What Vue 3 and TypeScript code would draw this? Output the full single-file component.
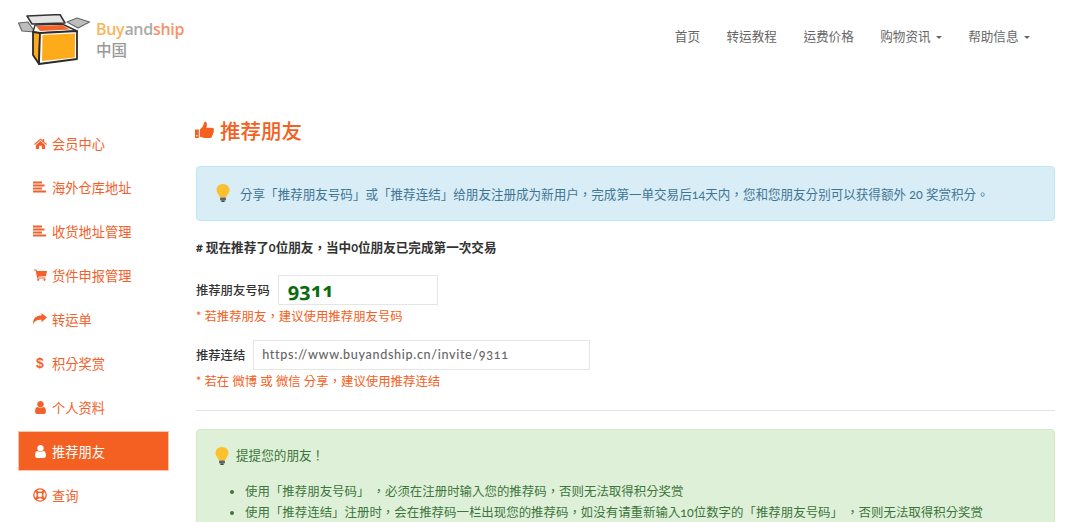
<script setup lang="ts">
interface MenuItem { label: string; icon: string; active?: boolean }
const menu: MenuItem[] = [
  { label: '会员中心', icon: 'home' },
  { label: '海外仓库地址', icon: 'lines' },
  { label: '收货地址管理', icon: 'lines' },
  { label: '货件申报管理', icon: 'cart' },
  { label: '转运单', icon: 'share' },
  { label: '积分奖赏', icon: 'dollar' },
  { label: '个人资料', icon: 'user' },
  { label: '推荐朋友', icon: 'user', active: true },
  { label: '查询', icon: 'ring' },
]
const nav = [
  { label: '首页' },
  { label: '转运教程' },
  { label: '运费价格' },
  { label: '购物资讯', caret: true },
  { label: '帮助信息', caret: true },
]
</script>

<template>
  <div class="page">
    <header class="header">
      <div class="logo">
        <svg class="box" width="72" height="52" viewBox="0 0 72 52">
          <path d="M0.500 9 L10 8 L17 18 L4 17 Z" fill="#bdbdbd" stroke="#666" stroke-width="1.200" stroke-linejoin="round" />
          <path d="M9 2 L42 0.500 L47 9 L14 10 Z" fill="#e4e4e4" stroke="#333" stroke-width="1.500" stroke-linejoin="round" />
          <path d="M49 8 L59 4 L71.500 8 L60 14 Z" fill="#bdbdbd" stroke="#666" stroke-width="1.200" stroke-linejoin="round" />
          <path d="M15 18 L17 11 L44 10 L59 17 L22 19 Z" fill="#fff" stroke="#333" stroke-width="1.400" stroke-linejoin="round" />
          <path d="M18 12 L44 11 L52 15.500 L22 17 Z" fill="#f4642a" />
          <path d="M15 18 L22 19 L21 50 L15 41 Z" fill="#fdab1a" stroke="#2b2b2b" stroke-width="1.800" stroke-linejoin="round" />
          <path d="M22 19 L59 17 L59 45 L21 50 Z" fill="#fff" stroke="#2b2b2b" stroke-width="1.800" stroke-linejoin="round" />
          <path d="M24.500 21 L57 19.500 L56.800 43.500 L24 47 Z" fill="#fdab1a" />
        </svg>
        <div class="logo-text">
          <div class="brand"><span class="b1">Buy</span><span class="b2">and</span><span class="b3">ship</span></div>
          <div class="cn">中国</div>
        </div>
      </div>
      <nav class="nav">
        <a v-for="n in nav" :key="n.label" class="nav-item">
          {{ n.label }}<i v-if="n.caret" class="caret"></i>
        </a>
      </nav>
    </header>

    <div class="body">
      <aside class="side">
        <a v-for="m in menu" :key="m.label" class="side-item" :class="{ active: m.active }">
          <span class="ico">
            <svg v-if="m.icon === 'home'" width="13" height="11" viewBox="0 0 14 12" fill="currentColor">
              <path d="M7 0.500 L9.500 2.700 V1 H11 V4 L14 6.600 L13.200 7.500 L7 2.200 L0.800 7.500 L0 6.600 Z" />
              <path d="M7 3.400 L12 7.600 V12 H8.500 V8.500 H5.500 V12 H2 V7.600 Z" />
            </svg>
            <svg v-else-if="m.icon === 'lines'" width="14" height="12" viewBox="0 0 14 12" fill="currentColor">
              <rect x="0" y="0.500" width="9" height="2" /><rect x="0" y="3.500" width="11.500" height="2" />
              <rect x="0" y="6.500" width="9" height="2" /><rect x="0" y="9.500" width="13" height="2" />
            </svg>
            <svg v-else-if="m.icon === 'cart'" width="13" height="12" viewBox="0 0 13 12" fill="currentColor">
              <path d="M0 0.500 H2.500 L2.900 2 H13 L12 7 L4 7.800 L4.200 8.600 H11.500 V9.500 H3.200 L1.700 1.500 H0 Z" />
              <circle cx="4.300" cy="10.800" r="1.100" /><circle cx="10.500" cy="10.800" r="1.100" />
            </svg>
            <svg v-else-if="m.icon === 'share'" width="14" height="12" viewBox="0 0 14 12" fill="currentColor">
              <path d="M14 4.500 L8.500 0 V2.500 C3 2.500 0 5 0 11.500 C1.500 8 4 6.800 8.500 6.800 V9.200 Z" />
            </svg>
            <span v-else-if="m.icon === 'dollar'" class="dollar">$</span>
            <svg v-else-if="m.icon === 'user'" width="11" height="13" viewBox="0 0 1280 1536" fill="currentColor">
              <path d="M1280 1271q0 109-62.500 187t-150.500 78h-854q-88 0-150.500-78t-62.500-187q0-85 8.500-160.500t31.500-152 58.500-131 94-89 134.500-34.500q131 128 313 128t313-128q76 0 134.500 34.500t94 89 58.500 131 31.500 152 8.500 160.500zm-256-887q0 159-112.500 271.500t-271.500 112.500-271.500-112.500-112.500-271.500 112.500-271.500 271.500-112.500 271.500 112.500 112.500 271.500z" />
            </svg>
            <svg v-else width="14" height="14" viewBox="0 0 14 14" fill="none" stroke="currentColor">
              <circle cx="7" cy="7" r="6.200" stroke-width="1.300" />
              <circle cx="7" cy="7" r="2.900" stroke-width="1.300" />
              <path d="M2.600 2.600 L5 5 M11.400 2.600 L9 5 M2.600 11.400 L5 9 M11.400 11.400 L9 9" stroke-width="2.600" />
            </svg>
          </span>
          <span>{{ m.label }}</span>
        </a>
      </aside>

      <main class="main">
        <h1 class="title">
          <svg class="thumb" width="19" height="18" viewBox="0 0 19 18" fill="currentColor">
            <path d="M0 8.500 H3.800 V17 H0 Z M1.900 14 A0.800 0.800 0 1 0 1.900 15.600 A0.800 0.800 0 1 0 1.900 14 Z" fill-rule="evenodd" />
            <path d="M4.800 8.500 C7 7.500 8.500 4.500 9 1.800 C9.200 0.500 10.200 0.400 11 1 C12.400 2.300 12 5 11.300 6.800 H17 C18.800 6.800 19.400 8.300 18.600 9.500 C19.100 10.600 18.800 11.700 18 12.300 C18.300 13.400 17.900 14.300 17 14.800 C17.100 16.300 16 17 14.800 17 H10.500 C8.500 17 6.800 16 4.800 15.700 Z" />
          </svg>
          <span>推荐朋友</span>
        </h1>

        <div class="alert info">
          <svg class="bulb" width="14" height="18" viewBox="0 0 14 18">
            <path d="M7 0 C3 0 0.500 2.800 0.500 6 C0.500 9 3 10.500 3.800 13.500 H10.200 C11 10.500 13.500 9 13.500 6 C13.500 2.800 11 0 7 0 Z" fill="#fbc02d" />
            <rect x="4" y="13.500" width="6" height="3" rx="1" fill="#5f6368" /><rect x="5.200" y="16.500" width="3.600" height="1.500" rx="0.700" fill="#444" />
          </svg>
          <span>分享「推荐朋友号码」或「推荐连结」给朋友注册成为新用户，完成第一单交易后14天内，您和您朋友分别可以获得额外 20 奖赏积分。</span>
        </div>

        <p class="count"># 现在推荐了0位朋友，当中0位朋友已完成第一次交易</p>

        <div class="field f1">
          <label>推荐朋友号码</label>
          <div class="code">9311</div>
        </div>
        <p class="hint">* 若推荐朋友，建议使用推荐朋友号码</p>

        <div class="field f2">
          <label>推荐连结</label>
          <div class="url">https://www.buyandship.cn/invite/9311</div>
        </div>
        <p class="hint">* 若在 微博 或 微信 分享，建议使用推荐连结</p>

        <hr class="rule" />

        <div class="alert success">
          <div class="remind">
            <svg class="bulb" width="14" height="18" viewBox="0 0 14 18">
              <path d="M7 0 C3 0 0.500 2.800 0.500 6 C0.500 9 3 10.500 3.800 13.500 H10.200 C11 10.500 13.500 9 13.500 6 C13.500 2.800 11 0 7 0 Z" fill="#fbc02d" />
              <rect x="4" y="13.500" width="6" height="3" rx="1" fill="#5f6368" /><rect x="5.200" y="16.500" width="3.600" height="1.500" rx="0.700" fill="#444" />
            </svg>
            <span>提提您的朋友！</span>
          </div>
          <ul class="list">
            <li>使用「推荐朋友号码」 ，必须在注册时输入您的推荐码，否则无法取得积分奖赏</li>
            <li>使用「推荐连结」注册时，会在推荐码一栏出现您的推荐码，如没有请重新输入10位数字的「推荐朋友号码」 ，否则无法取得积分奖赏</li>
          </ul>
        </div>
      </main>
    </div>
  </div>
</template>

<style>
html, body { margin: 0; background: #fff; overflow: hidden; }
</style>

<style scoped>
.page {
  width: 1086px;
  height: 522px;
  overflow: hidden;
  font-family: "Lato", "Noto Sans CJK TC", sans-serif;
  font-variant-numeric: oldstyle-nums;
  font-size: 12.6px;
  color: #555;
}
.header {
  display: flex;
  justify-content: space-between;
  height: 100px;
  padding: 14px 56.5px 0 18px;
  box-sizing: border-box;
}
.logo { display: flex; align-items: flex-start; height: 54px; }
.logo-text { margin-left: 6px; margin-top: 5px; }
.brand { font-size: 16px; line-height: 20px; font-family: "Open Sans", sans-serif; font-weight: 600; letter-spacing: -0.3px; }
.b1 { color: #fdb45c; }
.b2 { color: #aaa; }
.b3 { color: #f9906a; }
.cn { font-size: 15.5px; line-height: 22px; color: #999; font-weight: 500; }
.nav { display: flex; gap: 26.5px; padding-top: 13px; }
.nav-item { line-height: 20px; color: #666; display: flex; align-items: center; height: 20px; }
.caret {
  display: inline-block;
  margin-left: 5px;
  width: 0; height: 0;
  border-top: 3.500px solid #666;
  border-left: 3.500px solid transparent;
  border-right: 3.500px solid transparent;
}
.body { display: flex; align-items: flex-start; padding-left: 18px; }
.side { width: 151px; flex: none; margin-top: 23px; display: flex; flex-direction: column; gap: 4px; }
.side-item {
  height: 40px;
  display: flex;
  align-items: center;
  padding-left: 16px;
  color: #f4602a;
  font-size: 13.250px;
}
.side-item.active { background: #f46021; color: #fff; outline: 1px solid #fbc4ab; outline-offset: -1px; }
.ico { width: 18px; display: flex; justify-content: center; align-items: center; margin-left: -3px; margin-right: 3px; }
.dollar { font-size: 14px; font-weight: 700; font-family: "Liberation Sans", sans-serif; }
.main { width: 859px; margin-left: 27px; flex: none; }
.title {
  margin: 9px 0 0;
  height: 42px;
  display: flex;
  align-items: center;
  gap: 6px;
  font-size: 20.500px;
  font-weight: 500;
  color: #f46021;
}
.thumb { margin-left: -1px; }
.alert { border-radius: 4px; box-sizing: border-box; }
.info {
  margin-top: 15px;
  height: 55px;
  background: #d9edf7;
  border: 1px solid #bce8f1;
  color: #3f7594;
  display: flex;
  align-items: center;
  padding: 0 0 1px 19px;
  gap: 10px;
  font-size: 12.550px;
}
.bulb { flex: none; }
.count { margin: 18px 0 0; line-height: 18px; color: #333; font-weight: 700; font-size: 12.600px; }
.field { display: flex; align-items: center; color: #333; }
.field label { font-weight: 500; font-size: 12.300px; }
.f1 { margin-top: 18px; gap: 8px; }
.f2 { margin-top: 15px; gap: 8px; }
.code {
  width: 160px; height: 30px; box-sizing: border-box;
  border: 1px solid #e6e6e6;
  padding-left: 9px;
  color: #0c6b0c;
  font-size: 20px;
  line-height: 28px;
  font-weight: 700;
  font-family: "Open Sans", sans-serif;
}
.url {
  width: 337px; height: 30px; box-sizing: border-box;
  border: 1px solid #e6e6e6;
  padding-left: 8px;
  line-height: 28px;
  color: #666;
  font-weight: 500;
  font-size: 12.600px;
  letter-spacing: 0.66px;
}
.hint { margin: 4px 0 0; line-height: 16px; color: #f46021; font-size: 12.400px; }
.rule { margin: 20px 0 0; border: 0; border-top: 1px solid #e4e4e4; }
.success {
  margin-top: 18px;
  height: 120px;
  background: #dff0d8;
  border: 1px solid #d6e9c6;
  color: #3c763d;
  padding: 17px 18px;
}
.remind { display: flex; align-items: center; gap: 7px; font-size: 12.600px; line-height: 18px; }
.list { margin: 15.500px 0 0; padding-left: 30px; line-height: 21px; font-size: 12.450px; }
.list li::marker { color: #3c763d; }
</style>
